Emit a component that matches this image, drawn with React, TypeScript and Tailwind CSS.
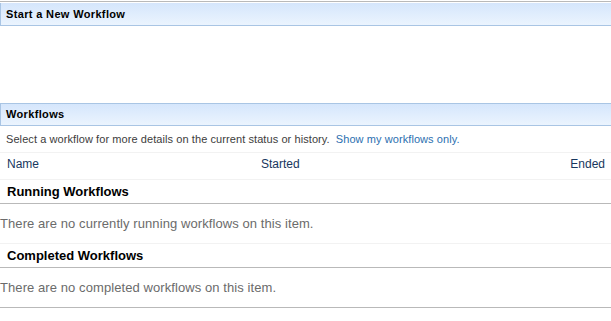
export default function App() {
  return (
    <div className="w-[611px] h-[321px] bg-white font-['Liberation_Sans',Arial,sans-serif] overflow-hidden">
      <div className="pt-px">
        <div className="h-px bg-[#b9b9b9]" />
        <div className="mt-px h-[23px] border-l border-b border-[#a9c5e4] bg-gradient-to-b from-[#d5e6fc] to-[#ebf4fe] flex items-center pl-[5px]">
          <span className="text-[11px] font-bold text-black tracking-[0.35px]">Start a New Workflow</span>
        </div>
      </div>

      <div className="mt-[77px] h-[23px] border-l border-t border-b border-[#a9c5e4] bg-gradient-to-b from-[#d5e6fc] to-[#ebf4fe] flex items-center pl-[5px]">
        <span className="text-[11px] font-bold text-black tracking-[0.35px]">Workflows</span>
      </div>

      <div className="h-[27px] flex items-center pl-[6px] text-[11px] text-[#3c3c3c] tracking-[0.08px] border-b border-[#f2f2f2]">
        Select a workflow for more details on the current status or history.
        <span className="ml-[6px] text-[#2b6fb0]">Show my workflows only.</span>
      </div>

      <div className="h-[27px] grid grid-cols-[254px_1fr_auto] items-center pb-[5px] pl-[7px] pr-[6px] text-[12px] text-[#17375e] border-b border-[#f2f2f2]">
        <span>Name</span>
        <span>Started</span>
        <span>Ended</span>
      </div>

      <div className="h-[24px] flex items-center pl-[7px] text-[13px] font-bold text-black border-b border-[#b9b9b9]">
        Running Workflows
      </div>
      <div className="h-[40px] flex items-center text-[13px] text-[#6b6b6b] tracking-[0.08px] border-b border-[#f2f2f2]">
        There are no currently running workflows on this item.
      </div>

      <div className="h-[24px] flex items-center pl-[7px] text-[13px] font-bold text-black border-b border-[#b9b9b9]">
        Completed Workflows
      </div>
      <div className="h-[40px] flex items-center text-[13px] text-[#6b6b6b] tracking-[0.08px] border-b border-[#b9b9b9]">
        There are no completed workflows on this item.
      </div>
    </div>
  );
}
